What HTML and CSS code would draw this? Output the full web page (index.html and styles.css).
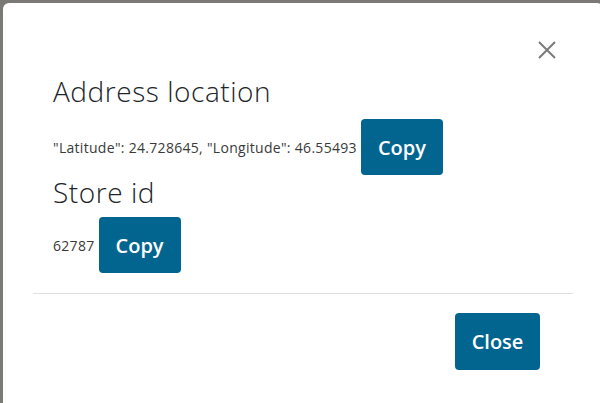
FILE: index.html
```html
<!DOCTYPE html>
<html>
<head>
<meta charset="utf-8">
<link rel="stylesheet" href="styles.css">
</head>
<body>
<div class="modal">
  <div class="modal-header">
    <button class="btn-x" aria-label="Close">
      <svg width="20" height="20" viewBox="0 0 20 20"><path d="M2 2 L18 18 M18 2 L2 18" stroke="#7a7a7a" stroke-width="2" fill="none"/></svg>
    </button>
  </div>
  <div class="modal-body">
    <h3 class="title">Address location</h3>
    <div class="row row-first">
      <span class="value">"Latitude": 24.728645, "Longitude": 46.55493</span>
      <button class="btn btn-copy">Copy</button>
    </div>
    <h3 class="title">Store id</h3>
    <div class="row row-second">
      <span class="value">62787</span>
      <button class="btn btn-copy">Copy</button>
    </div>
  </div>
  <div class="modal-footer">
    <button class="btn btn-close">Close</button>
  </div>
</div>
</body>
</html>
```
FILE: styles.css
```css
html, body {
  margin: 0;
  height: 100%;
  overflow: hidden;
}
body {
  background: #7a7975;
  font-family: "Open Sans", "Liberation Sans", sans-serif;
}
.modal {
  margin: 3px 0 0 3px;
  width: 600px;
  height: 400px;
  background: #fff;
  border-radius: 6px 6px 0 0;
}
.modal-header {
  display: flex;
  justify-content: flex-end;
  padding: 37px 46px 0 0;
  height: 34px;
}
.btn-x {
  border: 0;
  background: none;
  padding: 0;
  width: 20px;
  height: 20px;
  cursor: pointer;
}
.modal-body {
  padding: 0 50px;
}
.title {
  margin: 0;
  font-size: 28px;
  font-weight: 300;
  letter-spacing: 0.55px;
  line-height: 34px;
  color: #212529;
}
.row {
  display: flex;
  align-items: center;
  gap: 4px;
}
.row-first {
  margin-top: 11px;
}
.row-second {
  margin-top: 8px;
}
.value {
  font-size: 14px;
  letter-spacing: 0.3px;
  color: #3a3a3a;
}
.btn {
  background: #02658f;
  color: #fff;
  border: 0;
  border-radius: 4px;
  font-family: "Open Sans", "Liberation Sans", sans-serif;
  font-weight: 600;
  font-size: 20px;
  padding: 0;
}
.btn-copy {
  width: 82px;
  height: 56px;
}
.modal-footer {
  margin: 20px 30px 0 30px;
  border-top: 1px solid #e0e0e0;
  padding-top: 19px;
  display: flex;
  justify-content: flex-end;
  padding-right: 33px;
}
.btn-close {
  height: 57px;
  width: 85px;
}
```
